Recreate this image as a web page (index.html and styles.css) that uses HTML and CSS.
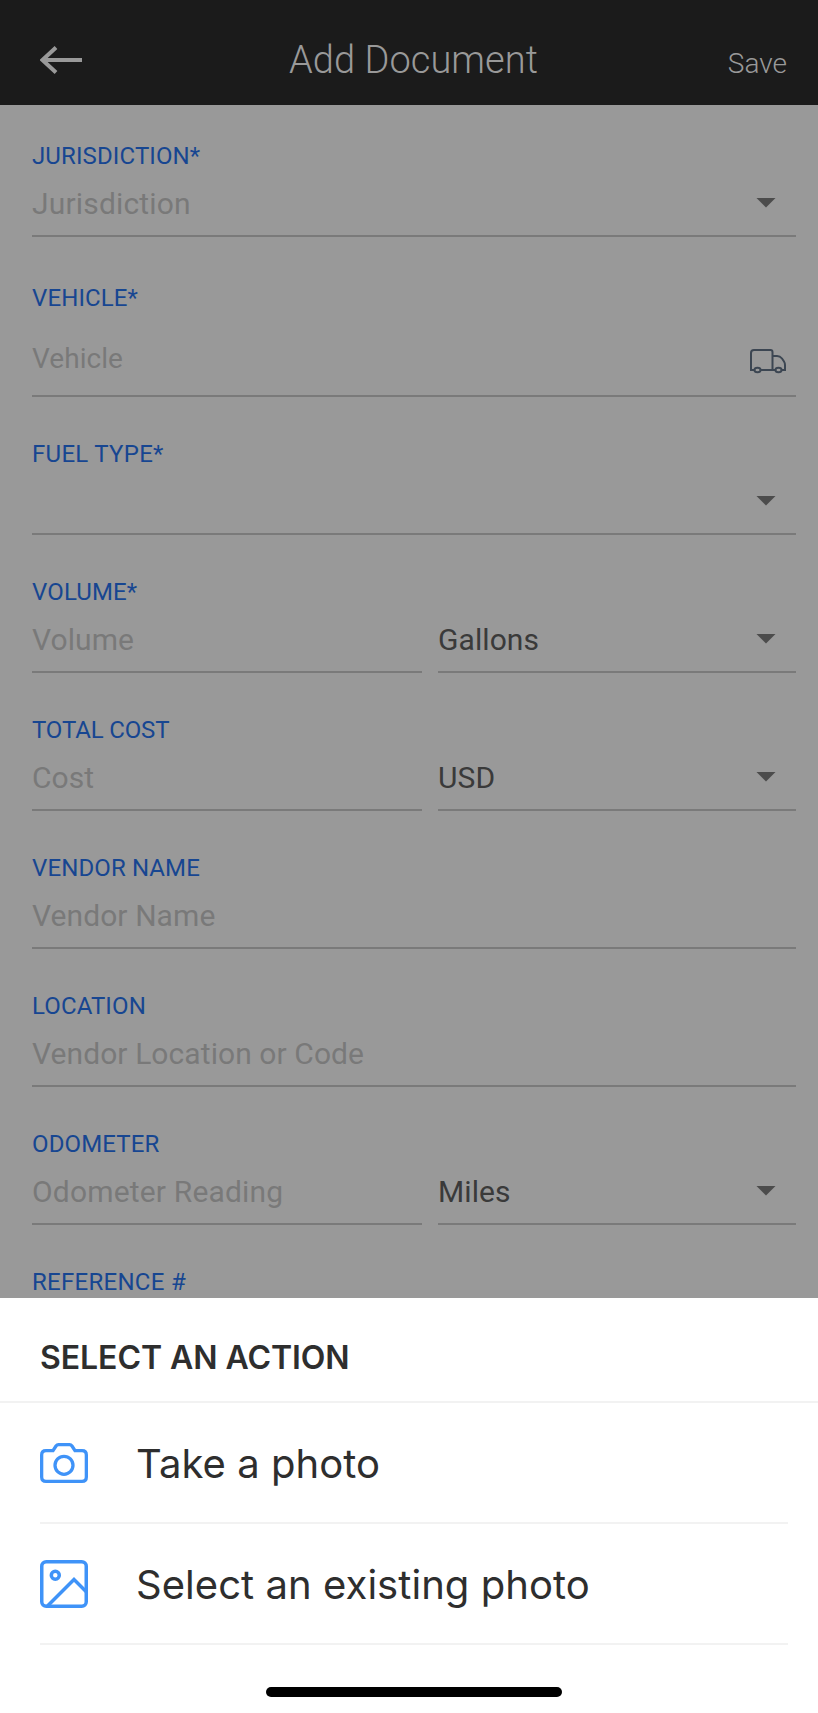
FILE: index.html
```html
<!DOCTYPE html>
<html lang="en">
<head>
<meta charset="utf-8">
<title>Add Document</title>
<link rel="stylesheet" href="styles.css">
</head>
<body>
<div class="screen">
  <header class="header">
    <svg class="back" width="42" height="28" viewBox="0 0 42 28"><path d="M42 14H3M16 1.5L2.5 14L16 26.5" fill="none" stroke="#999" stroke-width="4"/></svg>
    <h1 class="title">Add Document</h1>
    <span class="save">Save</span>
  </header>
  <main class="form">
    <section class="field first">
      <div class="label">JURISDICTION*</div>
      <div class="row"><div class="input"><span class="hint spaced">Jurisdiction</span><i class="caret"></i></div></div>
    </section>
    <section class="field vehicle">
      <div class="label">VEHICLE*</div>
      <div class="row"><div class="input"><span class="hint">Vehicle</span>
        <svg class="truck" width="36" height="26" viewBox="0 0 36 26" fill="none" stroke="#3c4652" stroke-width="2"><path d="M4.500 21H1V4Q1 1 4 1H20.500Q22.500 1 22.500 3V21M22.500 7H27Q30 7 32 9.500L34 12.500Q35 14 35 16V21H31.500M25.500 21H10.500"/><ellipse cx="7.500" cy="21" rx="3" ry="2.200"/><ellipse cx="28.500" cy="21" rx="3" ry="2.200"/></svg></div></div>
    </section>
    <section class="field">
      <div class="label wide">FUEL TYPE*</div>
      <div class="row"><div class="input"><span class="hint"></span><i class="caret"></i></div></div>
    </section>
    <section class="field">
      <div class="label">VOLUME*</div>
      <div class="row"><div class="input"><span class="hint">Volume</span></div><div class="input unit"><span class="value">Gallons</span><i class="caret"></i></div></div>
    </section>
    <section class="field">
      <div class="label tight">TOTAL COST</div>
      <div class="row"><div class="input"><span class="hint">Cost</span></div><div class="input unit"><span class="value">USD</span><i class="caret"></i></div></div>
    </section>
    <section class="field">
      <div class="label">VENDOR NAME</div>
      <div class="row"><div class="input"><span class="hint">Vendor Name</span></div></div>
    </section>
    <section class="field">
      <div class="label">LOCATION</div>
      <div class="row"><div class="input"><span class="hint">Vendor Location or Code</span></div></div>
    </section>
    <section class="field">
      <div class="label">ODOMETER</div>
      <div class="row"><div class="input"><span class="hint spaced">Odometer Reading</span></div><div class="input unit"><span class="value">Miles</span><i class="caret"></i></div></div>
    </section>
    <section class="field">
      <div class="label wide">REFERENCE #</div>
    </section>
  </main>
  <section class="sheet">
    <h2 class="sheet-title">SELECT AN ACTION</h2>
    <ul class="actions">
      <li class="action">
        <svg width="48" height="40" viewBox="0 0 48 40" fill="none" stroke="#3f93f8" stroke-width="3.300"><path d="M6 7.700H13L16 3Q17 1.650 18.500 1.650H29.500Q31 1.650 32 3L35 7.700H42Q46.350 7.700 46.350 12V34Q46.350 38.350 42 38.350H6Q1.650 38.350 1.650 34V12Q1.650 7.700 6 7.700Z"/><circle cx="24" cy="22.300" r="9"/></svg>
        <span>Take a photo</span>
      </li>
      <li class="action">
        <svg width="48" height="48" viewBox="0 0 48 48" fill="none" stroke="#3f93f8" stroke-width="3.500"><rect x="1.750" y="1.750" width="44.500" height="44.500" rx="4.500"/><circle cx="15.300" cy="15.300" r="4"/><path d="M7.500 46L34 19.500L46.500 32"/></svg>
        <span>Select an existing photo</span>
      </li>
    </ul>
    <div class="home"></div>
  </section>
</div>
</body>
</html>
```
FILE: styles.css
```css
* { box-sizing: border-box; }
body { margin: 0; background: #fff; font-family: Roboto, sans-serif; }
.screen { width: 818px; height: 1713px; display: flex; flex-direction: column; overflow: hidden; }
.header { height: 105px; flex: none; background: #1b1b1b; color: #999; display: grid; grid-template-columns: 200px 1fr 200px; padding: 0 31px 0 40px; }
.back { margin-top: 46px; }
.title { margin: 38px 0 0; font-size: 38px; line-height: 44px; font-weight: 300; text-align: center; white-space: nowrap; letter-spacing: 0.05px; }
.save { margin-top: 47px; font-size: 28px; line-height: 33px; font-weight: 300; text-align: right; }
.form { flex: none; height: 1193px; background: #999; padding: 0 22px 0 32px; overflow: hidden; }
.field { padding-top: 43px; }
.first { padding-top: 37px; }
.vehicle { padding-top: 47px; }
.label { font-size: 24px; line-height: 28px; color: #174691; letter-spacing: 0.12px; }
.tight { letter-spacing: -0.15px; }
.wide { letter-spacing: 0.28px; }
.row { display: flex; gap: 16px; }
.input { flex: 1; height: 67px; border-bottom: 2px solid #7a7a7a; display: flex; align-items: center; justify-content: space-between; padding-right: 20px; }
.unit { flex: none; width: 358px; }
.hint, .value { font-size: 30px; line-height: 35px; padding-top: 2px; color: #797979; letter-spacing: 0.08px; white-space: nowrap; }
.spaced { letter-spacing: 0.17px; }
.value { color: #3a3a3a; }
.caret { width: 20px; height: 10px; background: #4c4c4c; clip-path: polygon(0 0, 100% 0, 50% 100%); }
.vehicle .input { height: 85px; padding: 16px 10px 0 0; }
.vehicle .hint { font-size: 28px; letter-spacing: 0.05px; padding: 0 0 7px; }
.sheet { flex: 1; background: #fff; color: #2e2e2e; font-family: Inter, sans-serif; }
.sheet-title { margin: 0; height: 105px; padding: 40px 40px 0; border-bottom: 2px solid #f2f2f2; font-size: 32px; line-height: 40px; font-weight: 600; letter-spacing: -0.06px; }
.actions { list-style: none; margin: 0 30px 0 40px; padding: 0; }
.action { height: 121px; border-bottom: 2px solid #f2f2f2; display: flex; align-items: center; gap: 48px; font-size: 40px; line-height: 48px; letter-spacing: 0.05px; white-space: nowrap; }
.action span { padding-top: 2px; }
.home { width: 296px; height: 10px; margin: 42px 0 0 266px; border-radius: 5px; background: #000; }
```
